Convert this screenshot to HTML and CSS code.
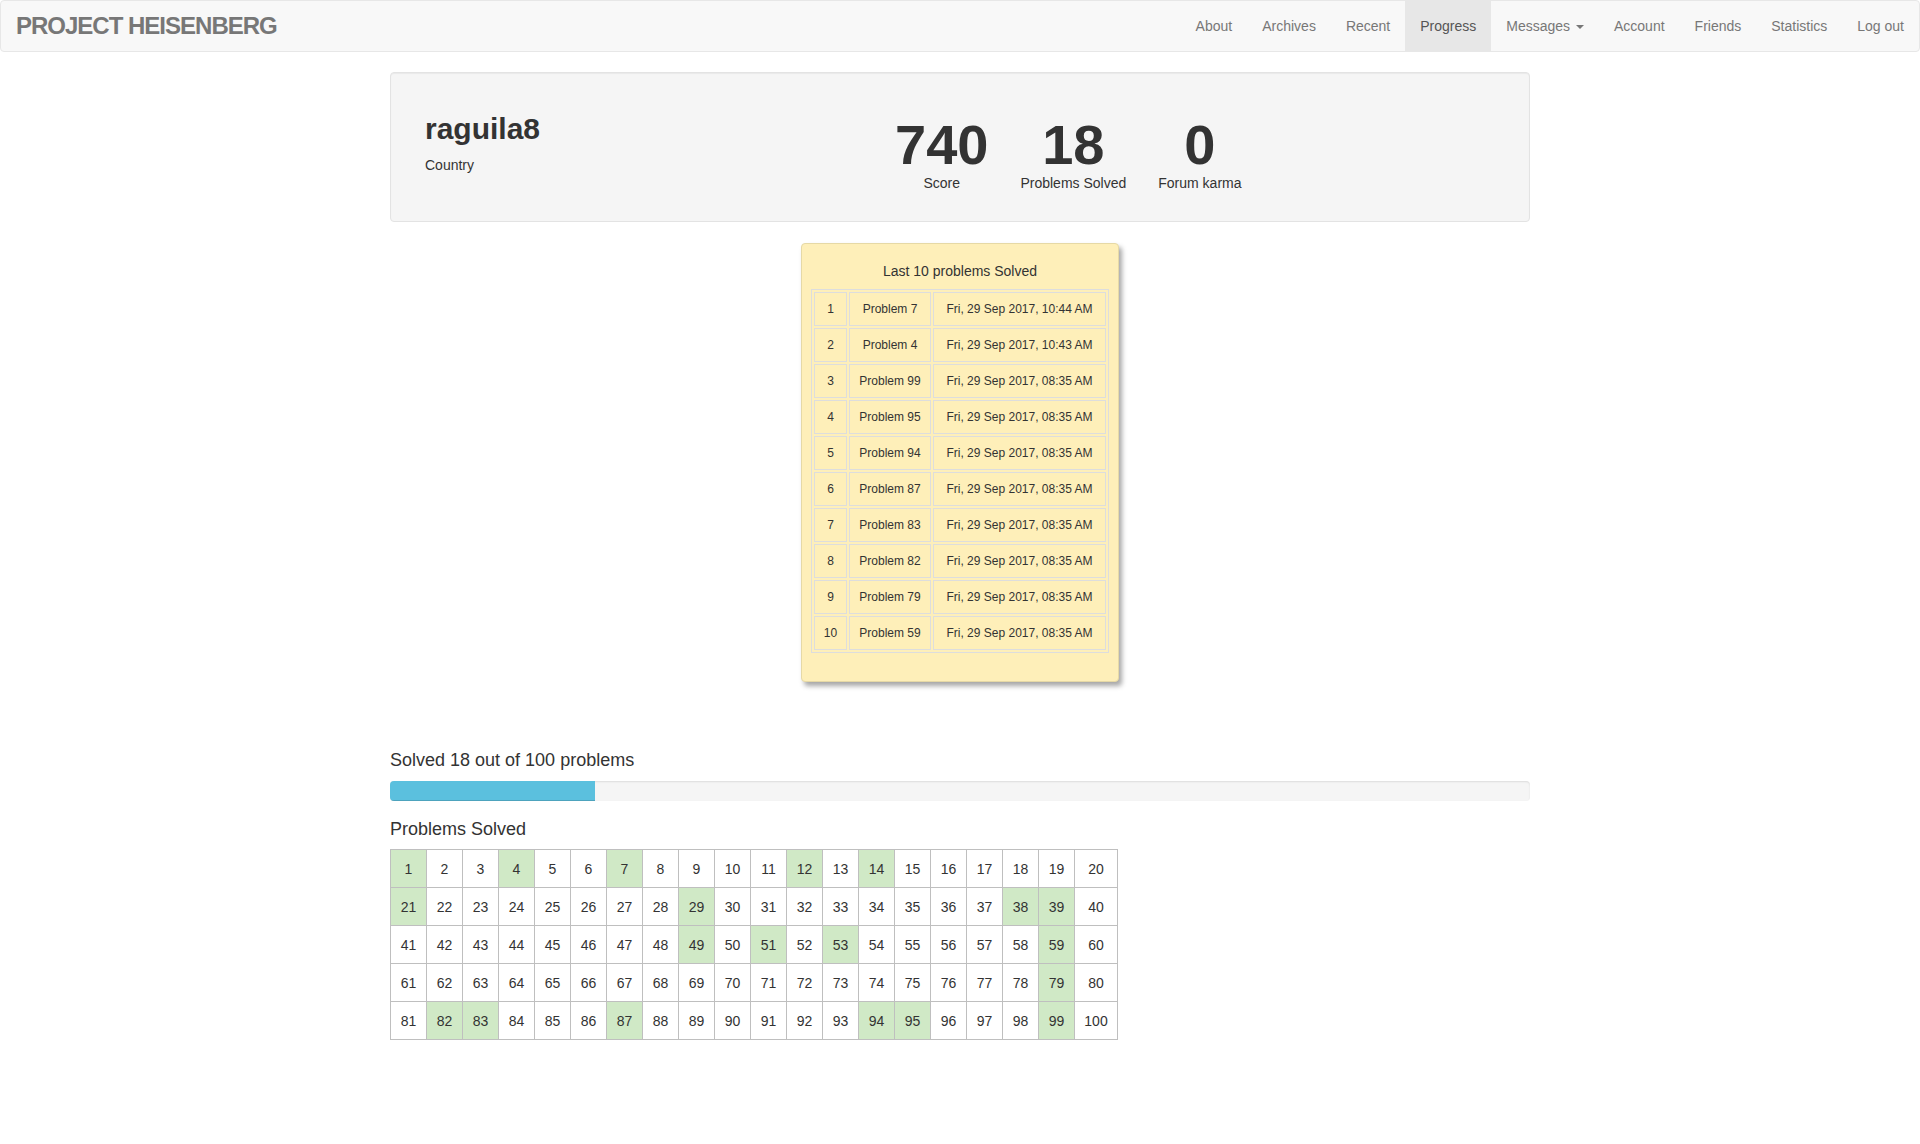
FILE: index.html
```html
<!DOCTYPE html>
<html>
<head>
<meta charset="utf-8">
<title>Project Heisenberg - Progress</title>
<link rel="stylesheet" href="styles.css">
</head>
<body>
<nav class="navbar">
  <a class="brand" href="#">PROJECT HEISENBERG</a>
  <ul class="nav">
    <li><a href="#">About</a></li>
    <li><a href="#">Archives</a></li>
    <li><a href="#">Recent</a></li>
    <li class="active"><a href="#">Progress</a></li>
    <li><a href="#">Messages <span class="caret"></span></a></li>
    <li><a href="#">Account</a></li>
    <li><a href="#">Friends</a></li>
    <li><a href="#">Statistics</a></li>
    <li><a href="#">Log out</a></li>
  </ul>
</nav>

<div class="container">
  <div class="well">
    <div class="who">
      <h2 class="name">raguila8</h2>
      <p class="country">Country</p>
    </div>
    <div class="stats">
      <div class="stat"><div class="num">740</div><div class="label">Score</div></div>
      <div class="stat"><div class="num">18</div><div class="label">Problems Solved</div></div>
      <div class="stat"><div class="num">0</div><div class="label">Forum karma</div></div>
    </div>
  </div>

  <div class="recent">
    <p class="recent-title">Last 10 problems Solved</p>
    <table class="recent-table">
      <tr><td class="c1">1</td><td class="c2">Problem 7</td><td>Fri, 29 Sep 2017, 10:44 AM</td></tr>
      <tr><td class="c1">2</td><td class="c2">Problem 4</td><td>Fri, 29 Sep 2017, 10:43 AM</td></tr>
      <tr><td class="c1">3</td><td class="c2">Problem 99</td><td>Fri, 29 Sep 2017, 08:35 AM</td></tr>
      <tr><td class="c1">4</td><td class="c2">Problem 95</td><td>Fri, 29 Sep 2017, 08:35 AM</td></tr>
      <tr><td class="c1">5</td><td class="c2">Problem 94</td><td>Fri, 29 Sep 2017, 08:35 AM</td></tr>
      <tr><td class="c1">6</td><td class="c2">Problem 87</td><td>Fri, 29 Sep 2017, 08:35 AM</td></tr>
      <tr><td class="c1">7</td><td class="c2">Problem 83</td><td>Fri, 29 Sep 2017, 08:35 AM</td></tr>
      <tr><td class="c1">8</td><td class="c2">Problem 82</td><td>Fri, 29 Sep 2017, 08:35 AM</td></tr>
      <tr><td class="c1">9</td><td class="c2">Problem 79</td><td>Fri, 29 Sep 2017, 08:35 AM</td></tr>
      <tr><td class="c1">10</td><td class="c2">Problem 59</td><td>Fri, 29 Sep 2017, 08:35 AM</td></tr>
    </table>
  </div>

  <h4 class="section-title">Solved 18 out of 100 problems</h4>
  <div class="progress"><div class="progress-bar" style="width: 18%"></div></div>

  <h4 class="section-title grid-title">Problems Solved</h4>
  <table class="grid">
    <colgroup>
      <col class="gc"><col class="gc"><col class="gc"><col class="gc"><col class="gc">
      <col class="gc"><col class="gc"><col class="gc"><col class="gc"><col class="gc">
      <col class="gc"><col class="gc"><col class="gc"><col class="gc"><col class="gc">
      <col class="gc"><col class="gc"><col class="gc"><col class="gc"><col class="gc-last">
    </colgroup>
    <tr>
      <td class="ok">1</td><td>2</td><td>3</td><td class="ok">4</td><td>5</td><td>6</td><td class="ok">7</td><td>8</td><td>9</td><td>10</td>
      <td>11</td><td class="ok">12</td><td>13</td><td class="ok">14</td><td>15</td><td>16</td><td>17</td><td>18</td><td>19</td><td>20</td>
    </tr>
    <tr>
      <td class="ok">21</td><td>22</td><td>23</td><td>24</td><td>25</td><td>26</td><td>27</td><td>28</td><td class="ok">29</td><td>30</td>
      <td>31</td><td>32</td><td>33</td><td>34</td><td>35</td><td>36</td><td>37</td><td class="ok">38</td><td class="ok">39</td><td>40</td>
    </tr>
    <tr>
      <td>41</td><td>42</td><td>43</td><td>44</td><td>45</td><td>46</td><td>47</td><td>48</td><td class="ok">49</td><td>50</td>
      <td class="ok">51</td><td>52</td><td class="ok">53</td><td>54</td><td>55</td><td>56</td><td>57</td><td>58</td><td class="ok">59</td><td>60</td>
    </tr>
    <tr>
      <td>61</td><td>62</td><td>63</td><td>64</td><td>65</td><td>66</td><td>67</td><td>68</td><td>69</td><td>70</td>
      <td>71</td><td>72</td><td>73</td><td>74</td><td>75</td><td>76</td><td>77</td><td>78</td><td class="ok">79</td><td>80</td>
    </tr>
    <tr>
      <td>81</td><td class="ok">82</td><td class="ok">83</td><td>84</td><td>85</td><td>86</td><td class="ok">87</td><td>88</td><td>89</td><td>90</td>
      <td>91</td><td>92</td><td>93</td><td class="ok">94</td><td class="ok">95</td><td>96</td><td>97</td><td>98</td><td class="ok">99</td><td>100</td>
    </tr>
  </table>
</div>
</body>
</html>
```

FILE: styles.css
```css
* { box-sizing: border-box; }

html, body {
  margin: 0;
  padding: 0;
  background: #fff;
}

body {
  font-family: "Liberation Sans", Arial, Helvetica, sans-serif;
  font-size: 14px;
  line-height: 20px;
  color: #333;
}

a { text-decoration: none; }

/* Navbar */
.navbar {
  display: flex;
  justify-content: space-between;
  align-items: stretch;
  height: 52px;
  background: #f8f8f8;
  border: 1px solid #e7e7e7;
  border-radius: 4px;
  margin-bottom: 20px;
}

.brand {
  display: block;
  padding: 15px;
  font-size: 24px;
  font-weight: bold;
  line-height: 20px;
  letter-spacing: -1px;
  color: #777;
}

.nav {
  display: flex;
  list-style: none;
  margin: 0;
  padding: 0;
}

.nav a {
  display: block;
  padding: 15px;
  line-height: 20px;
  color: #777;
}

.nav .active a {
  background: #e7e7e7;
  color: #555;
}

.caret {
  display: inline-block;
  width: 0;
  height: 0;
  margin-left: 2px;
  vertical-align: middle;
  border-top: 4px solid #777;
  border-left: 4px solid transparent;
  border-right: 4px solid transparent;
}

/* Main container */
.container {
  width: 1140px;
  margin: 0 auto;
}

.well {
  display: flex;
  height: 150px;
  padding: 0 19px 0 34px;
  background: #f5f5f5;
  border: 1px solid #e3e3e3;
  border-radius: 4px;
  box-shadow: inset 0 1px 1px rgba(0, 0, 0, 0.05);
}

.who {
  width: 455px;
  flex: none;
}

.name {
  margin: 39px 0 10px;
  font-size: 30px;
  line-height: 33px;
  font-weight: bold;
}

.country {
  margin: 0;
}

.stats {
  display: flex;
  gap: 2px;
  margin-top: 44px;
  align-items: flex-start;
}

.stat {
  padding: 0 15px;
  text-align: center;
}

.num {
  font-size: 56px;
  line-height: 56px;
  font-weight: bold;
}

.label {
  line-height: 20px;
}

/* Recent problems card */
.recent {
  width: 318px;
  margin: 21px auto 0;
  padding: 10px 9px 8px;
  background: #feefb9;
  border: 1px solid #e6d9a6;
  border-radius: 4px;
  box-shadow: 3px 4px 5px rgba(0, 0, 0, 0.35);
}

.recent-title {
  margin: 7px 0 8px;
  text-align: center;
}

.recent-table {
  width: 100%;
  border: 1px solid #ddd;
  border-spacing: 2px;
  margin-bottom: 20px;
  font-size: 12px;
}

.recent-table td {
  border: 1px solid #ddd;
  padding: 8px;
  line-height: 16px;
  text-align: center;
  white-space: nowrap;
}

.recent-table .c1 { width: 33px; }
.recent-table .c2 { width: 82px; }

/* Progress */
.section-title {
  margin: 68px 0 11px;
  font-size: 18px;
  font-weight: normal;
  line-height: 20px;
}

.grid-title {
  margin: 18px 0 10px;
}

.progress {
  height: 20px;
  background: #f5f5f5;
  border-radius: 4px;
  overflow: hidden;
  box-shadow: inset 0 1px 2px rgba(0, 0, 0, 0.1);
}

.progress-bar {
  height: 100%;
  background: #5bc0de;
  box-shadow: inset 0 -1px 0 rgba(0, 0, 0, 0.15);
}

/* Problems grid */
.grid {
  border-collapse: collapse;
  table-layout: fixed;
  width: 727px;
}

.grid .gc { width: 36px; }
.grid .gc-last { width: 43px; }

.grid td {
  height: 38px;
  padding: 0;
  border: 1px solid #bfbfbf;
  text-align: center;
  vertical-align: middle;
  font-size: 14px;
  line-height: 20px;
}

.grid td.ok {
  background: #d0e9c6;
}
```
